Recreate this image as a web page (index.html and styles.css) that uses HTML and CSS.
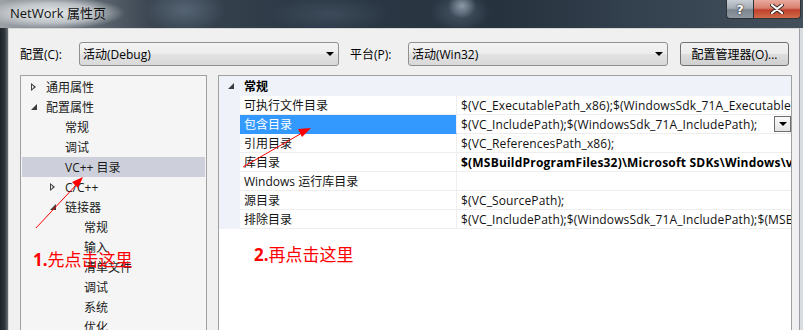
FILE: index.html
```html
<!DOCTYPE html>
<html lang="zh-CN">
<head>
<meta charset="utf-8">
<title>NetWork 属性页</title>
<link rel="stylesheet" href="styles.css">
</head>
<body>
<div class="window">
  <div class="titlebar">
    <span class="title">NetWork 属性页</span>
    <div class="caption-btns">
      <div class="cbtn help">?</div>
      <div class="cbtn close">
        <svg width="14" height="10" viewBox="0 0 14 10"><path d="M2 1 L12 9 M12 1 L2 9" stroke="#3a2a28" stroke-width="4" stroke-linecap="round"/><path d="M2 1 L12 9 M12 1 L2 9" stroke="#fff" stroke-width="2.2" stroke-linecap="round"/></svg>
      </div>
    </div>
  </div>
  <div class="body">
    <div class="frame-left"></div>
    <div class="client">
      <div class="toolbar">
        <span class="lbl lbl-cfg">配置(C):</span>
        <div class="combo"><span>活动(Debug)</span><i class="caret"></i></div>
        <span class="lbl lbl-plat">平台(P):</span>
        <div class="combo"><span>活动(Win32)</span><i class="caret"></i></div>
        <div class="btn">配置管理器(O)...</div>
      </div>
      <div class="panes">
        <div class="tree">
          <div class="node l1"><i class="tw open-no"></i><span>通用属性</span></div>
          <div class="node l1"><i class="tw exp"></i><span>配置属性</span></div>
          <div class="node l2"><i class="tw"></i><span>常规</span></div>
          <div class="node l2"><i class="tw"></i><span>调试</span></div>
          <div class="node l2 sel"><i class="tw"></i><span>VC++ 目录</span></div>
          <div class="node l2"><i class="tw open-no"></i><span>C/C++</span></div>
          <div class="node l2"><i class="tw exp"></i><span>链接器</span></div>
          <div class="node l3"><i class="tw"></i><span>常规</span></div>
          <div class="node l3"><i class="tw"></i><span>输入</span></div>
          <div class="node l3"><i class="tw"></i><span>清单文件</span></div>
          <div class="node l3"><i class="tw"></i><span>调试</span></div>
          <div class="node l3"><i class="tw"></i><span>系统</span></div>
          <div class="node l3"><i class="tw"></i><span>优化</span></div>
        </div>
        <div class="grid">
          <div class="cat"><i class="tw exp"></i><span>常规</span></div>
          <div class="row"><div class="strip"></div><div class="name">可执行文件目录</div><div class="val">$(VC_ExecutablePath_x86);$(WindowsSdk_71A_ExecutablePath);$(WindowsSdk_71A_ExecutablePath_x86)</div></div>
          <div class="row"><div class="strip"></div><div class="name selname">包含目录</div><div class="val">$(VC_IncludePath);$(WindowsSdk_71A_IncludePath);<span class="ddbtn"><i class="caret small"></i></span></div></div>
          <div class="row"><div class="strip"></div><div class="name">引用目录</div><div class="val">$(VC_ReferencesPath_x86);</div></div>
          <div class="row"><div class="strip"></div><div class="name">库目录</div><div class="val bold">$(MSBuildProgramFiles32)\Microsoft SDKs\Windows\v7.0A\lib</div></div>
          <div class="row"><div class="strip"></div><div class="name">Windows 运行库目录</div><div class="val"></div></div>
          <div class="row"><div class="strip"></div><div class="name">源目录</div><div class="val">$(VC_SourcePath);</div></div>
          <div class="row"><div class="strip"></div><div class="name">排除目录</div><div class="val">$(VC_IncludePath);$(WindowsSdk_71A_IncludePath);$(MSBuildToolsPath32);$(VC_LibraryPath_x86)</div></div>
        </div>
      </div>
    </div>
    <div class="frame-right"></div>
  </div>
  <div class="annot">
    <svg class="arrows" width="803" height="330" viewBox="0 0 803 330">
      <line x1="36" y1="228" x2="78" y2="183" stroke="#ff0000" stroke-width="1"/>
      <polygon points="83,177 72,182 78,188" fill="#ff0000"/>
      <line x1="243" y1="167" x2="302" y2="133" stroke="#ff0000" stroke-width="1"/>
      <polygon points="311,128 298,129 302,137" fill="#ff0000"/>
    </svg>
    <div class="note note1"><b>1.</b>先点击这里</div>
    <div class="note note2"><b>2.</b>再点击这里</div>
  </div>
</div>
</body>
</html>
```
FILE: styles.css
```css
* { box-sizing: border-box; }
html, body { margin: 0; padding: 0; }
body {
  width: 803px;
  height: 330px;
  overflow: hidden;
  font-family: "Open Sans", "Noto Sans CJK SC", sans-serif;
  font-size: 12px;
  color: #1a1a1a;
  background: #2a3440;
}
.window {
  position: relative;
  width: 803px;
  height: 330px;
  display: flex;
  flex-direction: column;
  overflow: hidden;
}
.titlebar {
  height: 28px;
  flex: none;
  display: flex;
  align-items: flex-start;
  background:
    radial-gradient(ellipse 70px 16px at 55px 13px, rgba(235,238,240,0.95), rgba(235,238,240,0.6) 60%, rgba(235,238,240,0) 100%),
    radial-gradient(ellipse 40px 22px at 185px 10px, rgba(120,140,160,0.45), rgba(120,140,160,0)),
    radial-gradient(ellipse 30px 20px at 460px 12px, rgba(120,140,160,0.4), rgba(120,140,160,0)),
    radial-gradient(ellipse 14px 12px at 462px 6px, rgba(220,230,240,0.6), rgba(220,230,240,0)),
    radial-gradient(ellipse 60px 18px at 330px 14px, rgba(90,110,130,0.35), rgba(90,110,130,0)),
    linear-gradient(90deg, #9ca1a6 0px, #6f7880 70px, #3b4652 150px, #2d3946 300px, #26323e 500px, #34414e 640px, #43505c 803px);
}
.title {
  font-family: "Open Sans", "Noto Sans CJK SC", sans-serif;
  font-size: 13px;
  line-height: 16px;
  margin: 5px 0 0 10px;
  color: #111;
}
.caption-btns {
  margin-left: auto;
  margin-right: 2px;
  display: flex;
  height: 19px;
}
.cbtn {
  height: 19px;
  display: flex;
  align-items: center;
  justify-content: center;
  border: 1px solid #2e3338;
  border-top: none;
}
.help {
  width: 27px;
  border-radius: 0 0 0 4px;
  background: linear-gradient(#c9ced4 0%, #a6adb5 45%, #7d858e 55%, #8f98a1 100%);
  color: #fff;
  font-family: "DejaVu Sans", sans-serif;
  font-weight: bold;
  font-size: 13px;
  text-shadow: 0 0 2px #222, 0 0 1px #222;
  border-right: none;
}
.close {
  width: 48px;
  border-radius: 0 0 4px 0;
  background: linear-gradient(#e9aa9d 0%, #d7806e 45%, #c0412c 55%, #d06a4a 100%);
}
.body {
  flex: 1;
  display: flex;
  min-height: 0;
}
.frame-left {
  width: 8px;
  flex: none;
  background: linear-gradient(90deg, #1e2328, #30373e 5px, #5f666d 7px);
}
.frame-right {
  width: 3px;
  flex: none;
  background: #d8dce0;
}
.client {
  flex: 1;
  background: #f0f0f0;
  border-left: 1px solid #d8d8d8;
  border-top: 1px solid #d8d8d8;
  border-right: 1px solid #9a9fa5;
  padding: 13px 0 0 11px;
  display: flex;
  flex-direction: column;
  min-width: 0;
}
.toolbar {
  display: flex;
  align-items: center;
  height: 24px;
}
.lbl { color: #000; font-size: 12px; }
.lbl-cfg { width: 59px; }
.lbl-plat { width: 58px; margin-left: 11px; }
.combo {
  width: 260px;
  height: 24px;
  border: 1px solid #8e8f8f;
  border-radius: 3px;
  background: linear-gradient(#f4f4f4, #ececec 50%, #e2e2e2 51%, #d9d9d9);
  display: flex;
  align-items: center;
  padding-left: 3px;
  padding-right: 4px;
  color: #000;
}
.combo span { flex: 1; }
.caret {
  display: block;
  width: 0; height: 0;
  border-left: 4px solid transparent;
  border-right: 4px solid transparent;
  border-top: 4px solid #000;
}
.btn {
  margin-left: 12px;
  width: 109px;
  height: 24px;
  border: 1px solid #707070;
  border-radius: 3px;
  background: linear-gradient(#f2f2f2, #ebebeb 50%, #dddddd 51%, #cfcfcf);
  display: flex;
  align-items: center;
  justify-content: center;
  color: #000;
}
.panes {
  margin-top: 9px;
  display: flex;
  flex: 1;
  min-height: 0;
}
.tree {
  width: 187px;
  flex: none;
  border: 1px solid #a0a0a0;
  background: #f5f5f5;
  padding: 1px;
  height: 270px;
}
.node {
  height: 20px;
  display: flex;
  align-items: center;
  color: #1a1a1a;
}
.node.l1 { padding-left: 7px; }
.node.l2 { padding-left: 26px; }
.node.l3 { padding-left: 45px; }
.node.sel { background: #cdd0da; }
.tw {
  display: block;
  width: 17px;
  height: 10px;
  flex: none;
  position: relative;
}
.tw.open-no::before {
  content: "";
  position: absolute;
  left: 2px; top: 1px;
  width: 0; height: 0;
  border-top: 4px solid transparent;
  border-bottom: 4px solid transparent;
  border-left: 5px solid #404040;
}
.tw.open-no::after {
  content: "";
  position: absolute;
  left: 3px; top: 3px;
  width: 0; height: 0;
  border-top: 2px solid transparent;
  border-bottom: 2px solid transparent;
  border-left: 2px solid #f5f5f5;
}
.tw.exp::before {
  content: "";
  position: absolute;
  left: 2px; top: 2px;
  width: 0; height: 0;
  border-left: 6px solid transparent;
  border-bottom: 6px solid #3c3c3c;
}
.grid {
  margin-left: 11px;
  width: 574px;
  flex: none;
  border: 1px solid #a0a0a0;
  background: #fff;
  height: 270px;
  overflow: hidden;
}
.cat {
  height: 20px;
  display: flex;
  align-items: center;
  background: #eff3f9;
  padding-left: 8px;
  font-weight: bold;
  color: #000;
}
.cat .tw { width: 17px; }
.cat .tw.exp::before { left: 1px; top: 2px; }
.row {
  height: 19px;
  display: flex;
}
.strip {
  width: 21px;
  flex: none;
  background: #eff3f9;
}
.name {
  width: 217px;
  flex: none;
  border-bottom: 1px solid #eeeeee;
  border-right: 1px solid #eeeeee;
  padding-left: 4px;
  display: flex;
  align-items: center;
  white-space: nowrap;
  color: #111;
}
.name.selname { background: #3399ff; color: #fff; border-bottom-color: #3399ff; }
.val {
  flex: 1;
  min-width: 0;
  border-bottom: 1px solid #eeeeee;
  padding-left: 4px;
  display: flex;
  align-items: center;
  white-space: nowrap;
  overflow: hidden;
  color: #111;
  position: relative;
  letter-spacing: 0.13px;
}
.val.bold { font-weight: bold; color: #000; letter-spacing: 0.2px; }
.ddbtn {
  position: absolute;
  right: 0;
  top: 1px;
  width: 17px;
  height: 16px;
  border: 1px solid #6e6e6e;
  background: linear-gradient(#fafafa, #e4e4e4);
  display: flex;
  align-items: center;
  justify-content: center;
}
.annot {
  position: absolute;
  inset: 0;
  pointer-events: none;
}
.arrows { position: absolute; left: 0; top: 0; }
.note {
  position: absolute;
  color: #ff0000;
  font-family: "Noto Sans CJK SC", sans-serif;
  font-size: 17px;
  line-height: 20px;
  white-space: nowrap;
}
.note b { font-family: "Open Sans", sans-serif; font-weight: bold; }
.note1 { left: 33px; top: 249px; }
.note2 { left: 254px; top: 244px; }
```
